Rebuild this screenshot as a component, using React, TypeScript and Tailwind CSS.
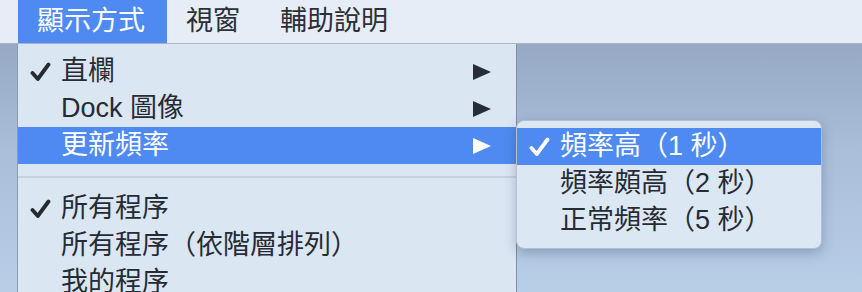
import React from 'react';

const font = "font-['Liberation_Sans','Noto_Sans_CJK_TC',sans-serif]";

const Check: React.FC<{ white?: boolean }> = ({ white }) => (
    <svg width="21" height="20" viewBox="0 0 21 20" className="shrink-0">
        <path
            d="M2.5 11 L7.8 17 L18.5 2.5"
            fill="none"
            stroke={white ? '#ffffff' : '#262b33'}
            strokeWidth="3.8"
            strokeLinecap="round"
            strokeLinejoin="round"
        />
    </svg>
);

const Arrow: React.FC<{ white?: boolean }> = ({ white }) => (
    <svg width="18" height="16" viewBox="0 0 18 16" className="shrink-0">
        <path d="M0 0 L18 8 L0 16 Z" fill={white ? '#ffffff' : '#262d38'} />
    </svg>
);

type Item = { label: string; checked?: boolean; sub?: boolean; active?: boolean };

const MenuRow: React.FC<{ item: Item }> = ({ item }) => (
    <div
        className={`flex items-center h-[37px] pl-[12px] pr-[25px] ${
            item.active ? 'bg-[#4e8af1] text-white' : 'text-[#272b33]'
        }`}
    >
        <div className="w-[31px] flex items-center">
            {item.checked && <Check white={item.active} />}
        </div>
        <span className="flex-1 text-[27px] leading-none whitespace-nowrap">{item.label}</span>
        {item.sub && <Arrow white={item.active} />}
    </div>
);

const topItems: Item[] = [
    { label: '直欄', checked: true, sub: true },
    { label: 'Dock 圖像', sub: true },
    { label: '更新頻率', sub: true, active: true },
];

const bottomItems: Item[] = [
    { label: '所有程序', checked: true },
    { label: '所有程序（依階層排列）' },
    { label: '我的程序' },
];

const subItems: Item[] = [
    { label: '頻率高（1 秒）', checked: true, active: true },
    { label: '頻率頗高（2 秒）' },
    { label: '正常頻率（5 秒）' },
];

export default function App() {
    return (
        <div
            className={`relative w-[862px] h-[292px] overflow-hidden bg-gradient-to-b from-[#8fa1bb] via-[#a9bdd8] to-[#b8cde6] ${font}`}
        >
            {/* Menu bar */}
            <div className="flex h-[44px] bg-[#e6edf7] border-b border-[#a9b5c6] text-[27px] leading-none text-[#2b2f36]">
                <div className="w-[18px]" />
                <div className="flex items-center pl-[19px] pr-[22px] bg-[#4e8af1] text-white">顯示方式</div>
                <div className="flex items-center pl-[19px] pr-[21px]">視窗</div>
                <div className="flex items-center pl-[19px]">輔助說明</div>
            </div>

            <div className="flex">
                <div className="w-[17px]" />
                {/* Main menu */}
                <div className="w-[500px] h-[260px] bg-[#dbe6f3] border-l border-[#8e9bb0] border-r border-r-[#7f8faa] pt-[9px]">
                    {topItems.map((it) => (
                        <MenuRow key={it.label} item={it} />
                    ))}
                    <div className="py-[12px]">
                        <div className="h-[2px] bg-[#c6d1de]" />
                    </div>
                    {bottomItems.map((it) => (
                        <MenuRow key={it.label} item={it} />
                    ))}
                </div>
            </div>

            {/* Submenu */}
            <div className="absolute left-[516px] top-[120px] w-[306px] h-[129px] rounded-[8px] bg-[#dce7f4] border border-[#b4c0cf] shadow-[0_4px_12px_rgba(40,60,90,0.3)] pt-[7px] overflow-hidden">
                {subItems.map((it) => (
                    <MenuRow key={it.label} item={it} />
                ))}
            </div>
        </div>
    );
}
